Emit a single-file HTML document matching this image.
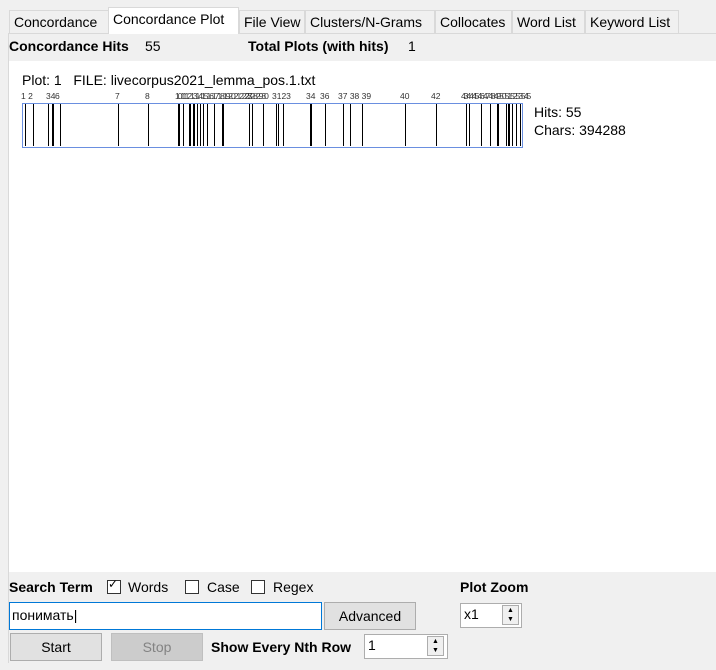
<!DOCTYPE html>
<html><head><meta charset="utf-8"><style>
*{box-sizing:border-box;margin:0;padding:0}
body{width:716px;height:670px;background:#f0f0f0;font-family:"Liberation Sans",sans-serif;font-size:14px;color:#000;position:relative;overflow:hidden}
.a{position:absolute;white-space:nowrap}
.tab{position:absolute;top:10px;height:24px;border:1px solid #d9d9d9;border-bottom:none;background:#f0f0f0;font-size:14px;line-height:22px;padding:0 4px;white-space:nowrap;overflow:hidden}
.b{font-weight:bold}
.ln{position:absolute;top:0;width:1px;height:42px;background:#000}
.lb{position:absolute;top:91px;font-size:8.5px;color:#333;white-space:nowrap}
.btn{position:absolute;border:1px solid #adadad;background:#e1e1e1;text-align:center;line-height:26px;font-size:14px}
.cb{position:absolute;width:14px;height:14px;border:1px solid #333;background:#fff}
</style></head><body>
<div class="tab" style="left:9px;width:100px">Concordance</div>
<div class="tab" style="left:108px;top:7px;height:27px;width:131px;background:#fff;border-color:#d9d9d9;z-index:2">Concordance Plot</div>
<div class="tab" style="left:239px;width:66px">File View</div>
<div class="tab" style="left:305px;width:130px">Clusters/N-Grams</div>
<div class="tab" style="left:435px;width:77px">Collocates</div>
<div class="tab" style="left:512px;width:73px">Word List</div>
<div class="tab" style="left:585px;width:94px">Keyword List</div>
<div class="a" style="left:8px;top:33px;width:708px;height:1px;background:#d9d9d9"></div>
<div class="a" style="left:8px;top:33px;width:1px;height:630px;background:#d9d9d9"></div>
<div class="a b" style="left:9px;top:38px">Concordance Hits</div>
<div class="a" style="left:145px;top:38px">55</div>
<div class="a b" style="left:248px;top:38px">Total Plots (with hits)</div>
<div class="a" style="left:408px;top:38px">1</div>
<div class="a" style="left:9px;top:61px;width:707px;height:511px;background:#fff"></div>
<div class="a" style="left:22px;top:72px">Plot: 1&nbsp;&nbsp;&nbsp;FILE: livecorpus2021_lemma_pos.1.txt</div>
<div class="lb" style="left:21px">1 2</div><div class="lb" style="left:46px">34</div><div class="lb" style="left:55px">6</div>
<div class="lb" style="left:115px">7</div><div class="lb" style="left:145px">8</div>
<div class="lb" style="left:175px;letter-spacing:-2px">1011121314151617181920212223</div>
<div class="lb" style="left:245px;letter-spacing:-2px">27282930</div><div class="lb" style="left:272px">3123</div>
<div class="lb" style="left:306px">34</div><div class="lb" style="left:320px">36</div><div class="lb" style="left:338px">37 38 39</div>
<div class="lb" style="left:400px">40</div><div class="lb" style="left:431px">42</div>
<div class="lb" style="left:461px;letter-spacing:-2px">4344454647484950515253545</div>
<div class="a" style="left:22px;top:103px;width:501px;height:45px;border:1px solid #6a8fe0;background:#fff">
<div class="ln" style="left:2px"></div><div class="ln" style="left:10px"></div><div class="ln" style="left:25px"></div><div class="ln" style="left:29px;width:2px"></div><div class="ln" style="left:37px"></div><div class="ln" style="left:95px"></div><div class="ln" style="left:125px"></div><div class="ln" style="left:155px;width:2px"></div><div class="ln" style="left:160px"></div><div class="ln" style="left:166px;width:2px"></div><div class="ln" style="left:170px;width:2px"></div><div class="ln" style="left:174px"></div><div class="ln" style="left:177px"></div><div class="ln" style="left:180px"></div><div class="ln" style="left:184px"></div><div class="ln" style="left:191px"></div><div class="ln" style="left:199px;width:2px"></div><div class="ln" style="left:226px"></div><div class="ln" style="left:229px"></div><div class="ln" style="left:240px"></div><div class="ln" style="left:253px"></div><div class="ln" style="left:255px"></div><div class="ln" style="left:260px"></div><div class="ln" style="left:287px"></div><div class="ln" style="left:288px"></div><div class="ln" style="left:302px"></div><div class="ln" style="left:320px"></div><div class="ln" style="left:327px"></div><div class="ln" style="left:339px"></div><div class="ln" style="left:382px"></div><div class="ln" style="left:413px"></div><div class="ln" style="left:443px"></div><div class="ln" style="left:446px"></div><div class="ln" style="left:458px"></div><div class="ln" style="left:467px"></div><div class="ln" style="left:474px;width:2px"></div><div class="ln" style="left:483px"></div><div class="ln" style="left:485px;width:2px"></div><div class="ln" style="left:489px"></div><div class="ln" style="left:493px"></div><div class="ln" style="left:497px"></div>
</div>
<div class="a" style="left:534px;top:104px">Hits: 55</div>
<div class="a" style="left:534px;top:122px">Chars: 394288</div>
<div class="a b" style="left:9px;top:579px">Search Term</div>
<div class="cb" style="left:107px;top:580px"></div><div class="a" style="left:108px;top:577px;font-size:12px">✓</div>
<div class="a" style="left:128px;top:579px">Words</div>
<div class="cb" style="left:185px;top:580px"></div><div class="a" style="left:207px;top:579px">Case</div>
<div class="cb" style="left:251px;top:580px"></div><div class="a" style="left:273px;top:579px">Regex</div>
<div class="a b" style="left:460px;top:579px">Plot Zoom</div>
<div class="a" style="left:9px;top:602px;width:313px;height:28px;border:1px solid #0078d7;background:#fff;padding:4px 2px">понимать|</div>
<div class="btn" style="left:324px;top:602px;width:92px;height:28px">Advanced</div>
<div class="a" style="left:460px;top:603px;width:62px;height:25px;border:1px solid #adadad;background:#fff;padding:2px 3px">x1</div>
<div class="a" style="left:502px;top:605px;width:17px;height:20px;border:1px solid #adadad;background:#f0f0f0;font-size:7px;line-height:9px;text-align:center">▲<br>▼</div>
<div class="btn" style="left:10px;top:633px;width:92px;height:28px">Start</div>
<div class="btn" style="left:111px;top:633px;width:92px;height:28px;background:#cccccc;border-color:#bfbfbf;color:#838383">Stop</div>
<div class="a b" style="left:211px;top:639px">Show Every Nth Row</div>
<div class="a" style="left:364px;top:634px;width:84px;height:25px;border:1px solid #adadad;background:#fff;padding:2px 3px">1</div>
<div class="a" style="left:427px;top:636px;width:17px;height:20px;border:1px solid #adadad;background:#f0f0f0;font-size:7px;line-height:9px;text-align:center">▲<br>▼</div>
</body></html>
